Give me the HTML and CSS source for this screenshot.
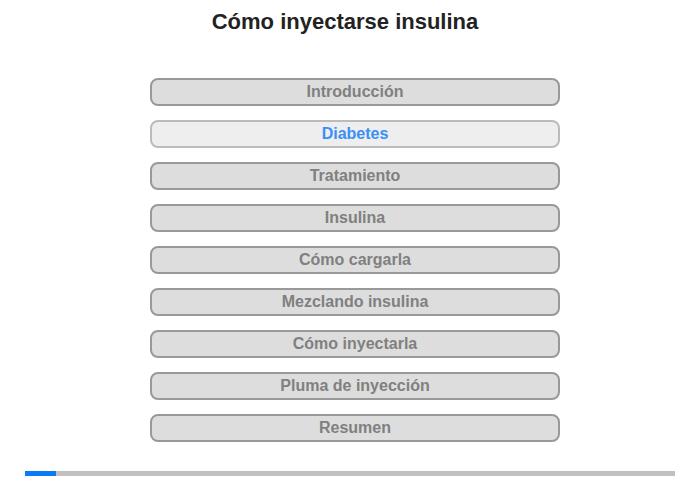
FILE: index.html
```html
<!DOCTYPE html>
<html lang="es">
<head>
    <meta charset="UTF-8">
    <title>Cómo inyectarse insulina</title>
    <link rel="stylesheet" href="styles.css">
</head>
<body>
    <h1 class="titulo">Cómo inyectarse insulina</h1>

    <div class="menu">
        <button class="item">Introducción</button>
        <button class="item activo">Diabetes</button>
        <button class="item">Tratamiento</button>
        <button class="item">Insulina</button>
        <button class="item">Cómo cargarla</button>
        <button class="item">Mezclando insulina</button>
        <button class="item">Cómo inyectarla</button>
        <button class="item">Pluma de inyección</button>
        <button class="item">Resumen</button>
    </div>

    <div class="progreso">
        <div class="barra" style="width: 31px;"></div>
    </div>
</body>
</html>
```

FILE: styles.css
```css
body {
    margin: 0;
    font-family: "Liberation Sans", Arial, sans-serif;
    background: white;
}
.titulo {
    margin: 0;
    padding: 9px 10px 0 0;
    font-size: 22px;
    line-height: 25px;
    text-align: center;
    color: #222;
}
.menu {
    display: flex;
    flex-direction: column;
    gap: 14px;
    width: 410px;
    margin: 44px 0 0 150px;
}
.item {
    height: 28px;
    padding: 0;
    background: #dddddd;
    border: 2px solid #999;
    border-radius: 8px;
    font-family: "Liberation Sans", Arial, sans-serif;
    font-size: 16px;
    font-weight: bold;
    color: #808080;
    cursor: pointer;
}
.item.activo {
    background: #eeeeee;
    border-color: #bbb;
    color: #3b8ff5;
}
.progreso {
    margin: 29px 25px 0 25px;
    height: 5px;
    background: #c0c0c0;
}
.barra {
    height: 100%;
    background: #0a7af5;
}
```
